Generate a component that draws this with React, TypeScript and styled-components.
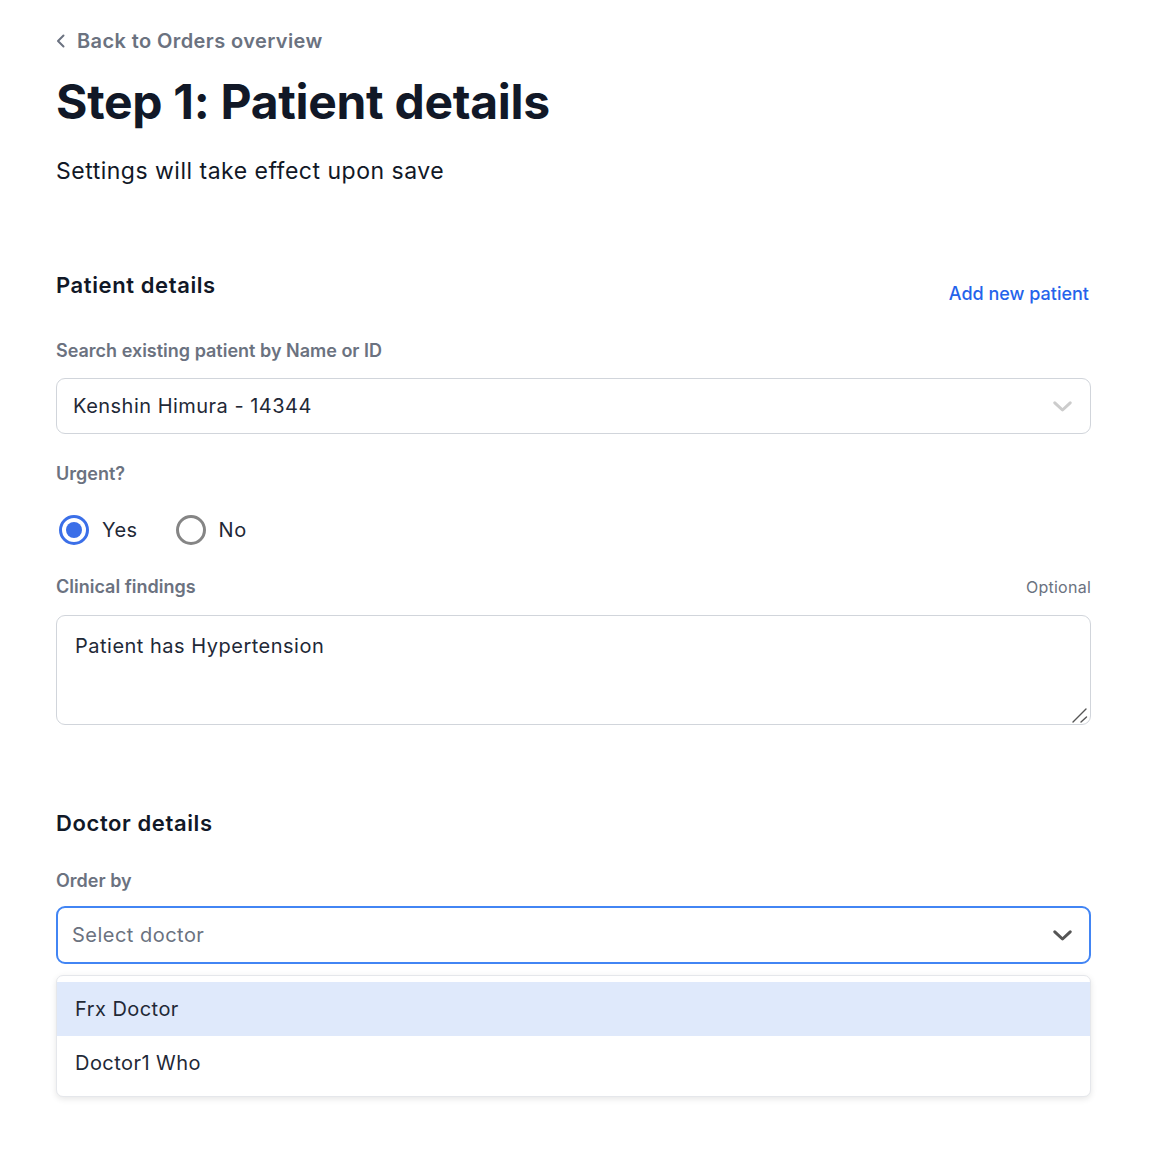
import React from "react";
import styled, { createGlobalStyle } from "styled-components";

const Global = createGlobalStyle`
  html, body { margin: 0; padding: 0; background: #ffffff; }
  body { font-family: Inter, "Noto Sans", "Liberation Sans", sans-serif; color: #1f2937; }
  * { box-sizing: border-box; }
`;

const Page = styled.div`
  width: 1166px;
  padding: 29px 75px 60px 56px;
  display: flex;
  flex-direction: column;
`;

const BackLink = styled.a`
  display: flex;
  align-items: center;
  gap: 11px;
  height: 24px;
  font-size: 20px;
  line-height: 24px;
  font-weight: 600;
  letter-spacing: 0.4px;
  color: #6b7280;
  text-decoration: none;
  cursor: pointer;
`;

const Title = styled.h1`
  margin: 20px 0 0;
  font-size: 48px;
  line-height: 58px;
  font-weight: 700;
  color: #111827;
  letter-spacing: -0.3px;
`;

const Subtitle = styled.p`
  margin: 24px 0 0;
  font-size: 23px;
  line-height: 32px;
  font-weight: 400;
  letter-spacing: 0.5px;
  color: #111827;
`;

const SectionHeader = styled.div<{ $top: number }>`
  margin-top: ${(p) => p.$top}px;
  display: flex;
  justify-content: space-between;
  align-items: flex-start;
`;

const SectionTitle = styled.h2`
  margin: 0;
  font-size: 22px;
  line-height: 28px;
  font-weight: 600;
  letter-spacing: 0.6px;
  color: #111827;
`;

const TextLink = styled.a`
  margin: 11px 2px 0 0;
  font-size: 18px;
  line-height: 24px;
  font-weight: 500;
  color: #2563eb;
  cursor: pointer;
`;

const LabelRow = styled.div<{ $top: number }>`
  margin-top: ${(p) => p.$top}px;
  display: flex;
  justify-content: space-between;
  align-items: baseline;
`;

const Label = styled.label`
  font-size: 18px;
  line-height: 24px;
  font-weight: 600;
  color: #6b7280;
`;

const Hint = styled.span`
  font-size: 16px;
  line-height: 24px;
  font-weight: 400;
  letter-spacing: 0.25px;
  color: #6b7280;
`;

const SelectBox = styled.div<{ $focused?: boolean; $top: number }>`
  margin-top: ${(p) => p.$top}px;
  height: ${(p) => (p.$focused ? 58 : 56)}px;
  display: flex;
  align-items: center;
  justify-content: space-between;
  padding: 0 ${(p) => (p.$focused ? 17 : 18)}px 0 ${(p) => (p.$focused ? 14 : 16)}px;
  border: ${(p) => (p.$focused ? "2px solid #4285f4" : "1px solid #d1d5db")};
  border-radius: 9px;
  background: #fff;
  cursor: pointer;
`;

const SelectValue = styled.span<{ $placeholder?: boolean }>`
  font-size: 20px;
  line-height: 24px;
  letter-spacing: 0.48px;
  color: ${(p) => (p.$placeholder ? "#6b7280" : "#1f2937")};
`;

const RadioGroup = styled.div`
  margin-top: 24px;
  height: 40px;
  display: flex;
  align-items: center;
  padding-left: 3px;
  gap: 38px;
`;

const RadioOption = styled.label`
  display: flex;
  align-items: center;
  gap: 13px;
  font-size: 20px;
  line-height: 24px;
  letter-spacing: 0.45px;
  color: #1f2937;
  cursor: pointer;
`;

const RadioCircle = styled.span<{ $checked?: boolean }>`
  width: 30px;
  height: 30px;
  border-radius: 50%;
  border: 3px solid ${(p) => (p.$checked ? "#3b6fe8" : "#858585")};
  display: flex;
  align-items: center;
  justify-content: center;
  &::after {
    content: "";
    display: ${(p) => (p.$checked ? "block" : "none")};
    width: 16px;
    height: 16px;
    border-radius: 50%;
    background: #3b6fe8;
  }
`;

const TextAreaWrap = styled.div`
  position: relative;
  margin-top: 16px;
`;

const TextArea = styled.textarea`
  width: 100%;
  height: 110px;
  padding: 18px 18px;
  border: 1px solid #d1d5db;
  border-radius: 9px;
  font-family: Inter, "Noto Sans", "Liberation Sans", sans-serif;
  font-size: 20px;
  line-height: 24px;
  letter-spacing: 0.5px;
  color: #1f2937;
  resize: none;
  outline: none;
  display: block;
`;

const Grip = styled.svg`
  position: absolute;
  right: 3px;
  bottom: 2px;
  pointer-events: none;
`;

const Menu = styled.ul`
  margin: 11px 0 0;
  padding: 6px 0;
  list-style: none;
  border: 1px solid #e5e7eb;
  border-radius: 7px;
  background: #fff;
  box-shadow: 0 2px 6px rgba(0, 0, 0, 0.1);
`;

const MenuItem = styled.li<{ $active?: boolean }>`
  height: 54px;
  display: flex;
  align-items: center;
  padding-left: 18px;
  font-size: 20px;
  line-height: 24px;
  letter-spacing: 0.45px;
  color: #1f2937;
  background: ${(p) => (p.$active ? "#dfe9fb" : "transparent")};
  cursor: pointer;
`;

const Chevron = ({ color }: { color: string }) => (
  <svg width="19" height="11" viewBox="0 0 19 11" fill="none">
    <polyline points="1.8,1.8 9.5,9 17.2,1.8" stroke={color} strokeWidth="3" strokeLinecap="round" strokeLinejoin="round" />
  </svg>
);

export default function App() {
  return (
    <>
      <Global />
      <Page>
        <BackLink>
          <svg width="10" height="14" viewBox="0 0 10 14" fill="none">
            <polyline points="7.5,1.5 2,7 7.5,12.5" stroke="#6b7280" strokeWidth="2" strokeLinecap="round" strokeLinejoin="round" />
          </svg>
          Back to Orders overview
        </BackLink>
        <Title>Step 1: Patient details</Title>
        <Subtitle>Settings will take effect upon save</Subtitle>

        <SectionHeader $top={84}>
          <SectionTitle>Patient details</SectionTitle>
          <TextLink>Add new patient</TextLink>
        </SectionHeader>

        <LabelRow $top={33}>
          <Label>Search existing patient by Name or ID</Label>
        </LabelRow>
        <SelectBox $top={15}>
          <SelectValue>Kenshin Himura - 14344</SelectValue>
          <Chevron color="#cccccc" />
        </SelectBox>

        <LabelRow $top={28}>
          <Label>Urgent?</Label>
        </LabelRow>
        <RadioGroup>
          <RadioOption>
            <RadioCircle $checked />
            Yes
          </RadioOption>
          <RadioOption>
            <RadioCircle />
            No
          </RadioOption>
        </RadioGroup>

        <LabelRow $top={25}>
          <Label>Clinical findings</Label>
          <Hint>Optional</Hint>
        </LabelRow>
        <TextAreaWrap>
          <TextArea defaultValue="Patient has Hypertension" />
          <Grip width="16" height="16" viewBox="0 0 16 16" fill="none">
            <line x1="1" y1="15" x2="14" y2="2" stroke="#555" strokeWidth="1.4" strokeLinecap="round" />
            <line x1="9" y1="15" x2="14.5" y2="10" stroke="#555" strokeWidth="1.4" strokeLinecap="round" />
          </Grip>
        </TextAreaWrap>

        <SectionHeader $top={84}>
          <SectionTitle>Doctor details</SectionTitle>
        </SectionHeader>

        <LabelRow $top={32}>
          <Label>Order by</Label>
        </LabelRow>
        <SelectBox $focused $top={13}>
          <SelectValue $placeholder>Select doctor</SelectValue>
          <Chevron color="#555555" />
        </SelectBox>
        <Menu>
          <MenuItem $active>Frx Doctor</MenuItem>
          <MenuItem>Doctor1 Who</MenuItem>
        </Menu>
      </Page>
    </>
  );
}
